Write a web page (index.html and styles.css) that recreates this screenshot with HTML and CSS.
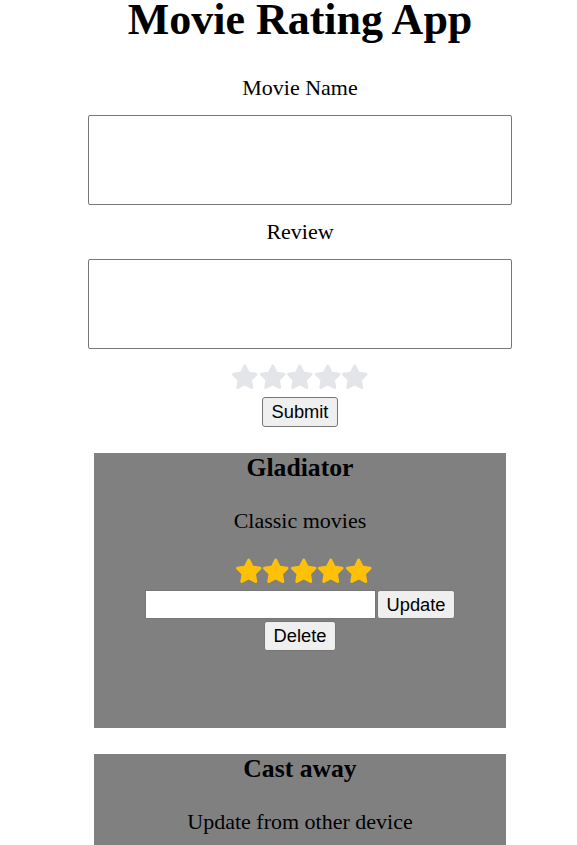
FILE: index.html
```html
<!DOCTYPE html>
<html lang="en">
<head>
    <meta charset="UTF-8">
    <title>Movie Rating App</title>
    <meta name="viewport" content="width=device-width, initial-scale=1">
    <link rel="stylesheet" href="styles.css">
</head>
<body>
<div class="app">
    <h1>Movie Rating App</h1>
    <form class="review-form">
        <label for="movieName">Movie Name</label>
        <textarea id="movieName" class="field"></textarea>

        <label for="review">Review</label>
        <textarea id="review" class="field"></textarea>

        <div class="stars">
            <svg viewBox="0 0 576 512"><path class="star-empty" d="M259.3 17.8L194 150.2 47.9 171.5c-26.2 3.8-36.7 36.1-17.7 54.6l105.7 103-25 145.5c-4.5 26.3 23.2 46 46.4 33.7L288 439.6l130.7 68.7c23.2 12.2 50.9-7.4 46.4-33.7l-25-145.5 105.7-103c19-18.5 8.5-50.8-17.7-54.6L382 150.2 316.7 17.8c-11.7-23.6-45.6-23.9-57.4 0z"/></svg>
            <svg viewBox="0 0 576 512"><path class="star-empty" d="M259.3 17.8L194 150.2 47.9 171.5c-26.2 3.8-36.7 36.1-17.7 54.6l105.7 103-25 145.5c-4.5 26.3 23.2 46 46.4 33.7L288 439.6l130.7 68.7c23.2 12.2 50.9-7.4 46.4-33.7l-25-145.5 105.7-103c19-18.5 8.5-50.8-17.7-54.6L382 150.2 316.7 17.8c-11.7-23.6-45.6-23.9-57.4 0z"/></svg>
            <svg viewBox="0 0 576 512"><path class="star-empty" d="M259.3 17.8L194 150.2 47.9 171.5c-26.2 3.8-36.7 36.1-17.7 54.6l105.7 103-25 145.5c-4.5 26.3 23.2 46 46.4 33.7L288 439.6l130.7 68.7c23.2 12.2 50.9-7.4 46.4-33.7l-25-145.5 105.7-103c19-18.5 8.5-50.8-17.7-54.6L382 150.2 316.7 17.8c-11.7-23.6-45.6-23.9-57.4 0z"/></svg>
            <svg viewBox="0 0 576 512"><path class="star-empty" d="M259.3 17.8L194 150.2 47.9 171.5c-26.2 3.8-36.7 36.1-17.7 54.6l105.7 103-25 145.5c-4.5 26.3 23.2 46 46.4 33.7L288 439.6l130.7 68.7c23.2 12.2 50.9-7.4 46.4-33.7l-25-145.5 105.7-103c19-18.5 8.5-50.8-17.7-54.6L382 150.2 316.7 17.8c-11.7-23.6-45.6-23.9-57.4 0z"/></svg>
            <svg viewBox="0 0 576 512"><path class="star-empty" d="M259.3 17.8L194 150.2 47.9 171.5c-26.2 3.8-36.7 36.1-17.7 54.6l105.7 103-25 145.5c-4.5 26.3 23.2 46 46.4 33.7L288 439.6l130.7 68.7c23.2 12.2 50.9-7.4 46.4-33.7l-25-145.5 105.7-103c19-18.5 8.5-50.8-17.7-54.6L382 150.2 316.7 17.8c-11.7-23.6-45.6-23.9-57.4 0z"/></svg>
        </div>
        <button type="submit" class="btn">Submit</button>
    </form>

    <div class="card">
        <h3>Gladiator</h3>
        <p>Classic movies</p>
        <div class="stars">
            <svg viewBox="0 0 576 512"><path class="star-full" d="M259.3 17.8L194 150.2 47.9 171.5c-26.2 3.8-36.7 36.1-17.7 54.6l105.7 103-25 145.5c-4.5 26.3 23.2 46 46.4 33.7L288 439.6l130.7 68.7c23.2 12.2 50.9-7.4 46.4-33.7l-25-145.5 105.7-103c19-18.5 8.5-50.8-17.7-54.6L382 150.2 316.7 17.8c-11.7-23.6-45.6-23.9-57.4 0z"/></svg>
            <svg viewBox="0 0 576 512"><path class="star-full" d="M259.3 17.8L194 150.2 47.9 171.5c-26.2 3.8-36.7 36.1-17.7 54.6l105.7 103-25 145.5c-4.5 26.3 23.2 46 46.4 33.7L288 439.6l130.7 68.7c23.2 12.2 50.9-7.4 46.4-33.7l-25-145.5 105.7-103c19-18.5 8.5-50.8-17.7-54.6L382 150.2 316.7 17.8c-11.7-23.6-45.6-23.9-57.4 0z"/></svg>
            <svg viewBox="0 0 576 512"><path class="star-full" d="M259.3 17.8L194 150.2 47.9 171.5c-26.2 3.8-36.7 36.1-17.7 54.6l105.7 103-25 145.5c-4.5 26.3 23.2 46 46.4 33.7L288 439.6l130.7 68.7c23.2 12.2 50.9-7.4 46.4-33.7l-25-145.5 105.7-103c19-18.5 8.5-50.8-17.7-54.6L382 150.2 316.7 17.8c-11.7-23.6-45.6-23.9-57.4 0z"/></svg>
            <svg viewBox="0 0 576 512"><path class="star-full" d="M259.3 17.8L194 150.2 47.9 171.5c-26.2 3.8-36.7 36.1-17.7 54.6l105.7 103-25 145.5c-4.5 26.3 23.2 46 46.4 33.7L288 439.6l130.7 68.7c23.2 12.2 50.9-7.4 46.4-33.7l-25-145.5 105.7-103c19-18.5 8.5-50.8-17.7-54.6L382 150.2 316.7 17.8c-11.7-23.6-45.6-23.9-57.4 0z"/></svg>
            <svg viewBox="0 0 576 512"><path class="star-full" d="M259.3 17.8L194 150.2 47.9 171.5c-26.2 3.8-36.7 36.1-17.7 54.6l105.7 103-25 145.5c-4.5 26.3 23.2 46 46.4 33.7L288 439.6l130.7 68.7c23.2 12.2 50.9-7.4 46.4-33.7l-25-145.5 105.7-103c19-18.5 8.5-50.8-17.7-54.6L382 150.2 316.7 17.8c-11.7-23.6-45.6-23.9-57.4 0z"/></svg>
        </div>
        <div class="edit-row">
            <input type="text" class="edit-input">
            <button class="btn">Update</button>
        </div>
        <button class="btn">Delete</button>
    </div>

    <div class="card">
        <h3>Cast away</h3>
        <p>Update from other device</p>
    </div>
</div>
</body>
</html>
```

FILE: styles.css
```css
body { margin: 0; overflow-x: hidden; background: #fff; font-family: "Liberation Serif", "Times New Roman", serif; color: #000; }
.app { width: 600px; text-align: center; }
h1 { margin: 0; font-size: 44px; line-height: 39px; font-weight: bold; }

.review-form { display: flex; flex-direction: column; align-items: center; }
.review-form label { display: block; margin-top: 36px; font-size: 22px; line-height: 25px; }
.review-form label[for="review"] { margin-top: 14px; }
.field {
    box-sizing: border-box; width: 424px; height: 90px; margin-top: 15px;
    border: 1px solid #767676; border-radius: 2px; resize: none; background: #fff;
}

.stars { display: flex; justify-content: center; height: 27.5px; margin-top: 14px; }
.stars svg { width: 27.5px; height: 27.5px; display: block; }
.star-empty { fill: #e4e5e9; }
.star-full { fill: #ffc107; }

.btn {
    box-sizing: border-box; height: 30px; padding: 0 9px; margin: 0;
    font-family: "Liberation Sans", Arial, sans-serif; font-size: 18.3px;
    color: #000; background: #efefef; border: 1px solid #767676; border-radius: 3px;
}
.review-form .btn { margin-top: 6px; }

.card { width: 412px; height: 275px; margin: 26px auto 0; background: #808080; overflow: hidden; }
.card h3 { margin: 0 0 25px; font-size: 25.7px; font-weight: bold; }
.card p { margin: 0 0 23px; font-size: 22px; }
.card .stars { margin-top: 0; padding-left: 7px; }
.edit-row { display: flex; justify-content: center; gap: 1px; margin-top: 6px; }
.edit-input { box-sizing: border-box; width: 231px; height: 29px; margin: 0; border: 1px solid #767676; background: #fff; }
.edit-row .btn { height: 29px; }
.card > .btn { margin-top: 2px; }
```
